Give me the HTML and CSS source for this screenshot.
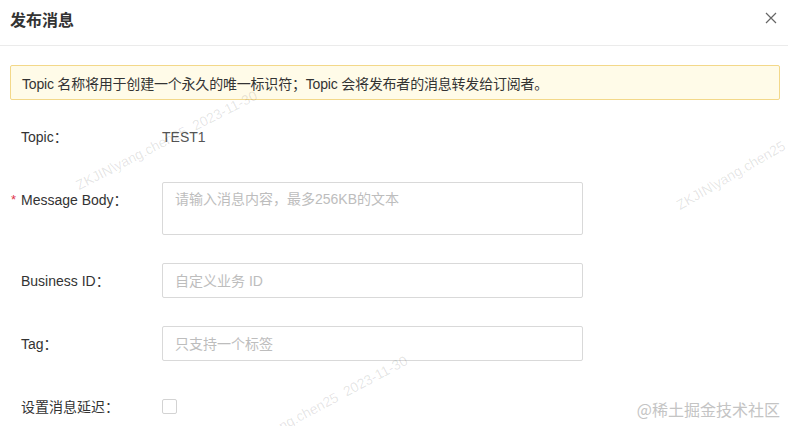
FILE: index.html
```html
<!DOCTYPE html>
<html lang="zh-CN">
<head>
<meta charset="utf-8">
<title>发布消息</title>
<link rel="stylesheet" href="styles.css">
</head>
<body>
<div class="dialog">
  <div class="dialog-header">
    <h1 class="dialog-title">发布消息</h1>
    <button class="close-btn" aria-label="关闭">
      <svg width="12" height="12" viewBox="0 0 12 12"><path d="M1 1L11 11M11 1L1 11" stroke="#666" stroke-width="1.2" fill="none"/></svg>
    </button>
  </div>
  <div class="dialog-body">
    <div class="alert">Topic 名称将用于创建一个永久的唯一标识符；Topic 会将发布者的消息转发给订阅者。</div>
    <form class="form">
      <div class="form-row">
        <label class="form-label"><span class="req"></span>Topic：</label>
        <div class="form-control"><span class="value">TEST1</span></div>
      </div>
      <div class="form-row form-row-top">
        <label class="form-label"><span class="req">*</span>Message Body：</label>
        <div class="form-control"><textarea class="input textarea" placeholder="请输入消息内容，最多256KB的文本"></textarea></div>
      </div>
      <div class="form-row">
        <label class="form-label"><span class="req"></span>Business ID：</label>
        <div class="form-control"><input class="input" type="text" placeholder="自定义业务 ID"></div>
      </div>
      <div class="form-row">
        <label class="form-label"><span class="req"></span>Tag：</label>
        <div class="form-control"><input class="input" type="text" placeholder="只支持一个标签"></div>
      </div>
      <div class="form-row">
        <label class="form-label"><span class="req"></span>设置消息延迟：</label>
        <div class="form-control"><span class="checkbox"></span></div>
      </div>
    </form>
  </div>
  <span class="wm wm1">ZKJIN\yang.chen25&nbsp;&nbsp;2023-11-30</span>
  <span class="wm wm2">ZKJIN\yang.chen25</span>
  <span class="wm wm3">ZKJIN\yang.chen25&nbsp;&nbsp;2023-11-30</span>
  <span class="juejin">@稀土掘金技术社区</span>
</div>
</body>
</html>
```

FILE: styles.css
```css
* { box-sizing: border-box; }
html, body {
  margin: 0;
  padding: 0;
  background: #fff;
}
body {
  font-family: "Liberation Sans", "Noto Sans CJK SC", sans-serif;
  font-size: 14px;
  color: #333;
  overflow: hidden;
}
.dialog {
  position: relative;
  width: 788px;
  height: 426px;
  background: #fff;
  overflow: hidden;
}
.dialog-header {
  height: 46px;
  display: flex;
  align-items: center;
  justify-content: space-between;
  padding: 0 11px 8px 10px;
  border-bottom: 1px solid #ebebeb;
}
.dialog-title {
  margin: 0;
  font-size: 16px;
  font-weight: bold;
  color: #333;
  font-family: "Noto Sans CJK SC", sans-serif;
}
.close-btn {
  border: 0;
  background: none;
  padding: 0;
  width: 12px;
  height: 12px;
  display: flex;
  margin-top: -2px;
}
.dialog-body {
  padding: 19px 8px 0 10px;
}
.alert {
  height: 35px;
  display: flex;
  align-items: center;
  padding: 0 11px;
  background: #fffbe8;
  border: 1px solid #f3d889;
  border-radius: 2px;
  color: #333;
  font-size: 14px;
  letter-spacing: -0.2px;
}
.form {
  margin-top: 19px;
  display: flex;
  flex-direction: column;
  gap: 28px;
}
.form-row {
  display: flex;
  align-items: center;
  min-height: 35px;
}
.form-row-top { align-items: flex-start; }
.form-row-top .form-label { padding-top: 8px; }
.form-label {
  width: 152px;
  flex: none;
  display: flex;
  color: #333;
  line-height: 20px;
}
.req {
  width: 11px;
  flex: none;
  color: #e0354d;
  font-size: 13px;
  padding-left: 1px;
}
.form-control {
  width: 421px;
  display: flex;
  align-items: center;
}
.value { color: #555; }
.input {
  width: 421px;
  height: 35px;
  border: 1px solid #d9d9d9;
  border-radius: 2px;
  padding: 0 12px;
  font-family: inherit;
  font-size: 14px;
  color: #333;
  background: #fff;
  outline: none;
}
.textarea {
  height: 53px;
  padding: 6px 12px;
  line-height: 20px;
  resize: none;
  display: block;
}
.input::placeholder { color: #bdbdbd; }
.checkbox {
  width: 15px;
  height: 15px;
  border: 1px solid #d3d3d3;
  border-radius: 2px;
  background: #fff;
  display: block;
}
.wm {
  position: absolute;
  font-size: 14px;
  line-height: 14px;
  color: rgba(0, 0, 0, 0.11);
  white-space: nowrap;
  transform-origin: 0 100%;
  pointer-events: none;
  font-family: "Liberation Sans", sans-serif;
}
.wm1 { left: 80px; top: 178px; transform: rotate(-27deg); }
.wm2 { left: 681px; top: 198px; transform: rotate(-30deg); }
.wm3 { left: 232px; top: 446px; transform: rotate(-28deg); }
.juejin {
  position: absolute;
  right: 8px;
  bottom: 5px;
  font-size: 16px;
  color: #c4c4c4;
  font-family: "Noto Sans CJK SC", sans-serif;
  pointer-events: none;
}
```
